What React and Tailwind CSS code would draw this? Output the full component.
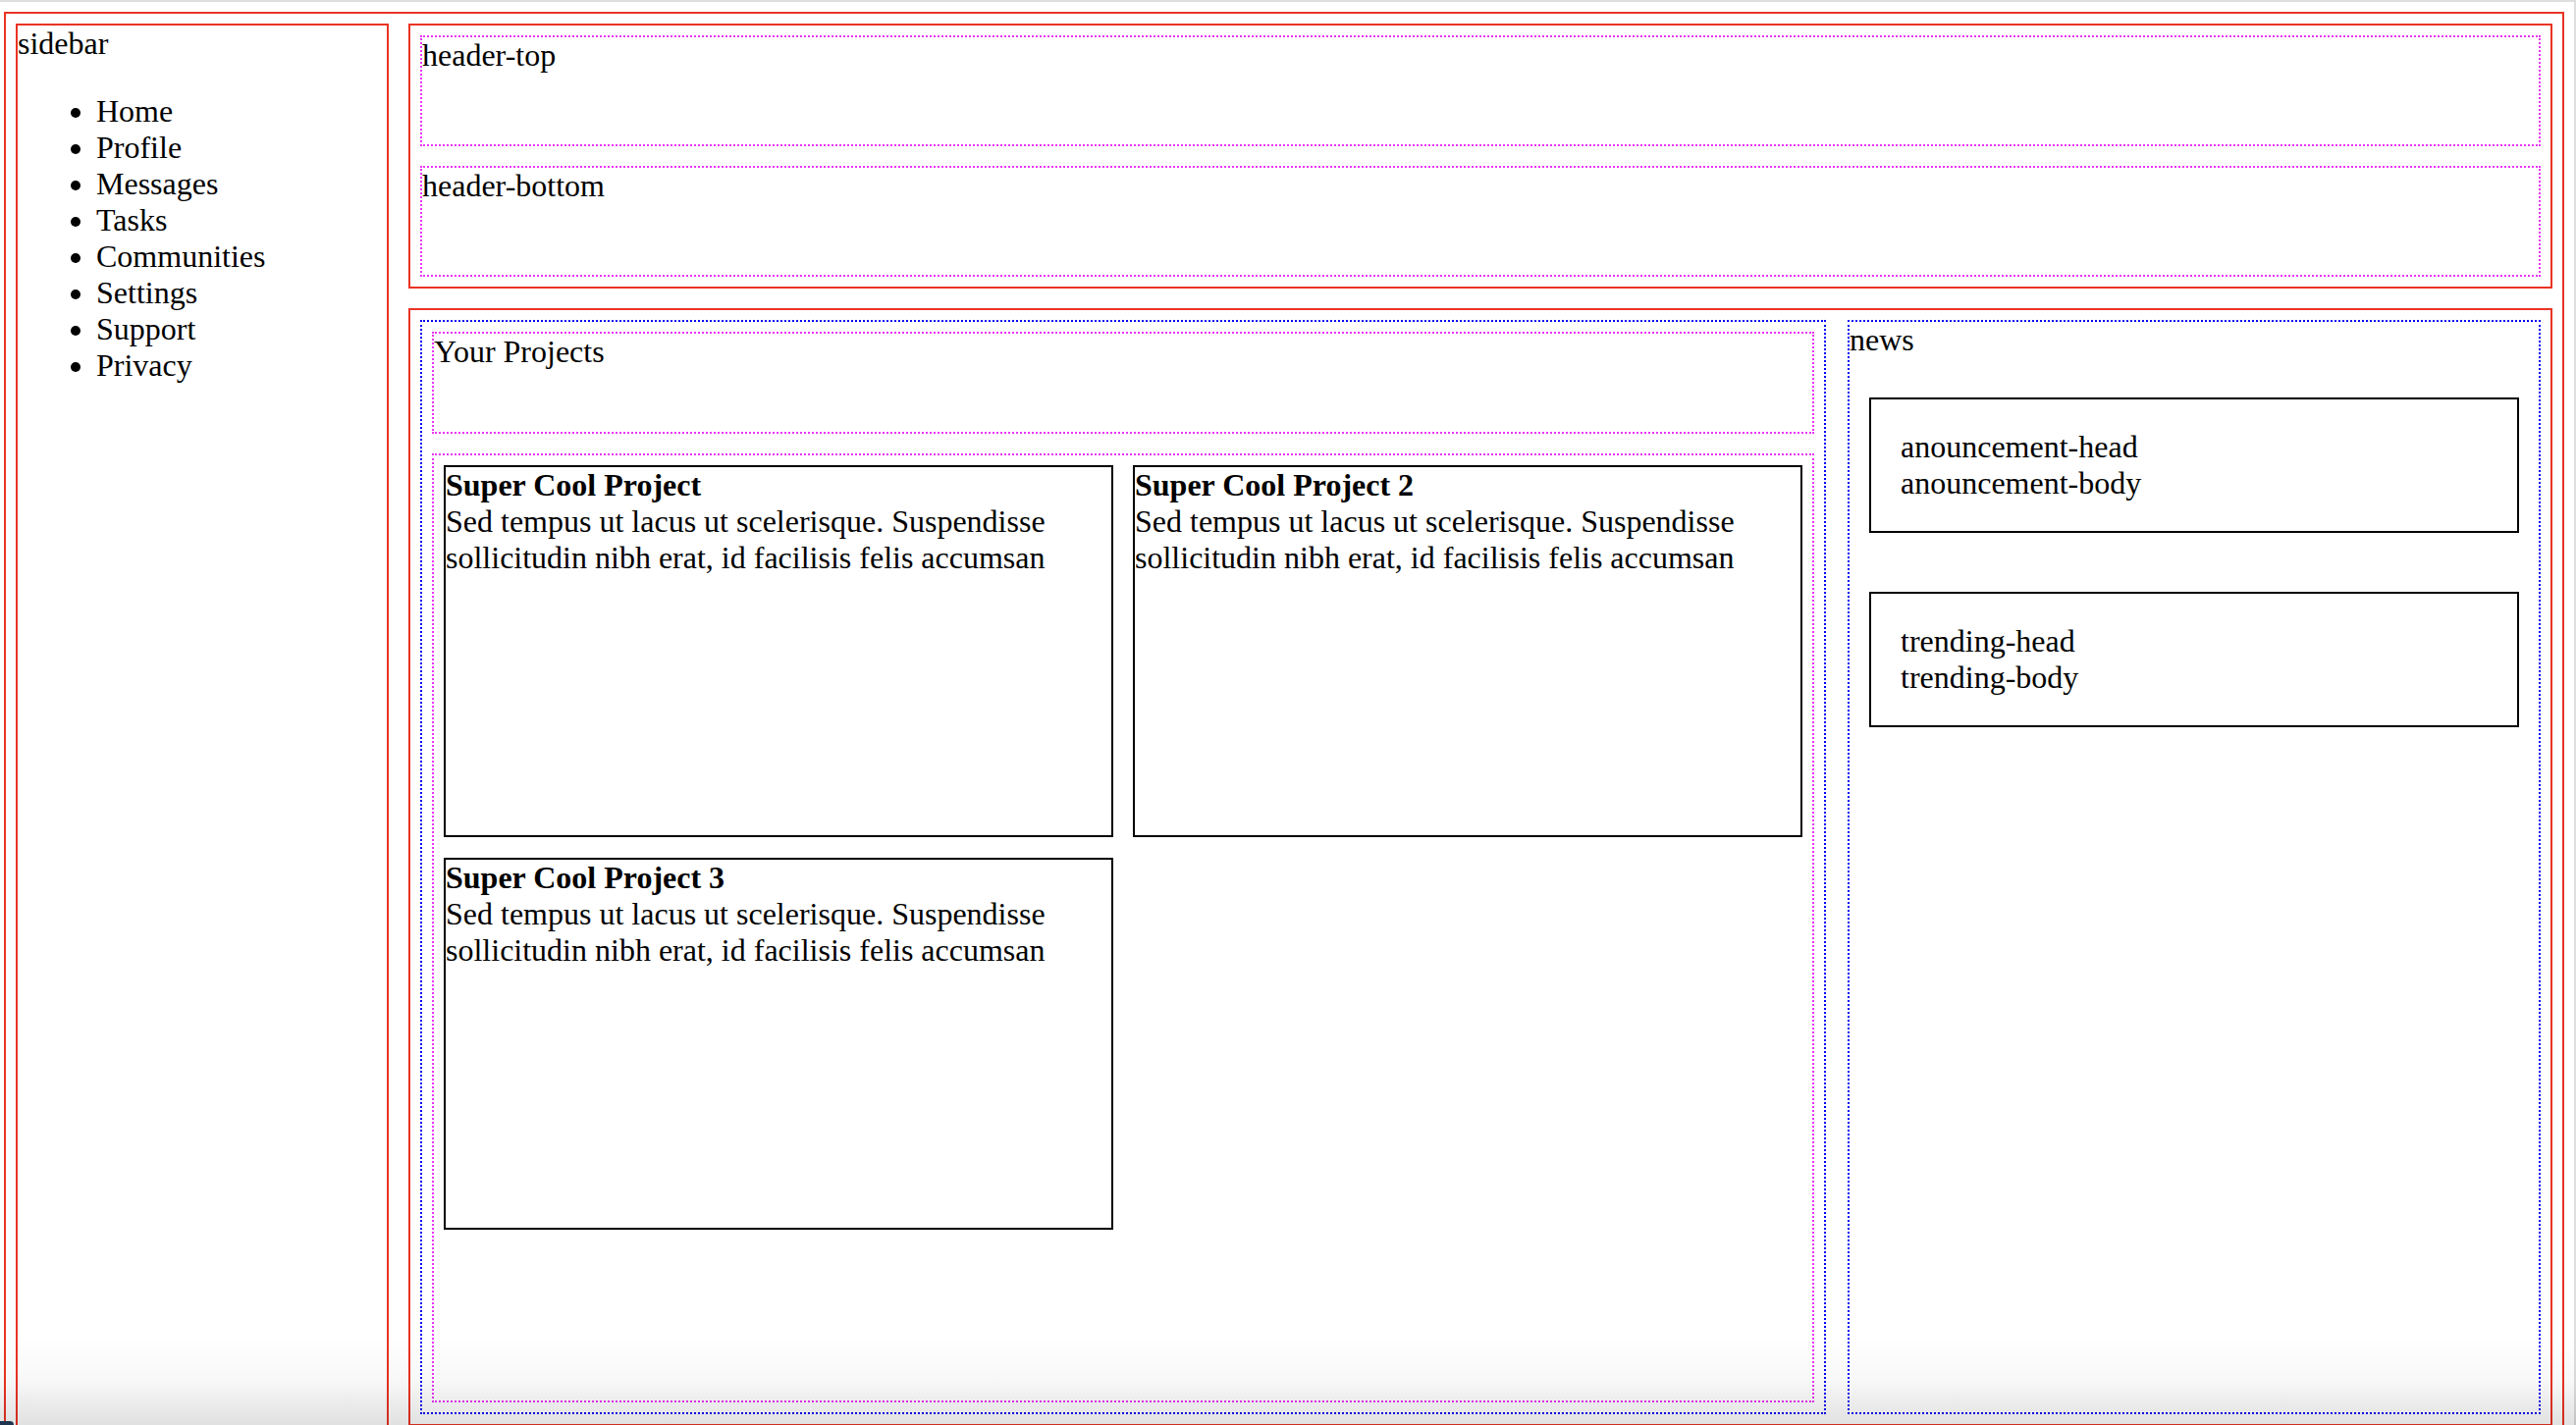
export default function App() {
  const links = ["Home", "Profile", "Messages", "Tasks", "Communities", "Settings", "Support", "Privacy"];
  const projects = ["Super Cool Project", "Super Cool Project 2", "Super Cool Project 3"];

  return (
    <div className="relative h-[1452px] overflow-hidden bg-[#dedede] pt-[2px] pr-[2px] font-['Liberation_Serif','Times_New_Roman',serif] text-[32px] leading-[37px] text-black">
      <div className="h-full bg-white pt-[10px] pr-[10px] pl-[4px]">
        <div className="flex h-[1600px] gap-[20px] border-2 border-[#ea3323] p-[10px]">
          {/* sidebar */}
          <aside className="w-[380px] shrink-0 border-2 border-[#ea3323]">
            <div>sidebar</div>
            <ul className="mt-[32px] list-disc pl-[80px]">
              {links.map(link => (
                <li key={link}>{link}</li>
              ))}
            </ul>
          </aside>

          <div className="flex flex-1 flex-col gap-[20px]">
            {/* header */}
            <header className="flex flex-col gap-[20px] border-2 border-[#ea3323] p-[10px]">
              <div className="h-[113px] border-2 border-dotted border-[#ea33f7]">header-top</div>
              <div className="h-[113px] border-2 border-dotted border-[#ea33f7]">header-bottom</div>
            </header>

            {/* main */}
            <main className="grid h-[1139px] grid-cols-[1432px_1fr] gap-x-[22px] border-2 border-[#ea3323] p-[10px]">
              <section className="flex flex-col gap-[20px] border-2 border-dotted border-[#0000f5] p-[10px]">
                <div className="h-[104px] border-2 border-dotted border-[#ea33f7]">Your Projects</div>
                <div className="grid flex-1 grid-cols-2 content-start gap-x-[20px] gap-y-[21px] border-2 border-dotted border-[#ea33f7] p-[10px]">
                  {projects.map(title => (
                    <div key={title} className="h-[379px] border-2 border-black">
                      <div className="font-bold">{title}</div>
                      <p>
                        Sed tempus ut lacus ut scelerisque. Suspendisse
                        <br />
                        sollicitudin nibh erat, id facilisis felis accumsan
                      </p>
                    </div>
                  ))}
                </div>
              </section>

              <section className="border-2 border-dotted border-[#0000f5]">
                <div>news</div>
                <div className="mx-[20px] mt-[40px] border-2 border-black p-[30px]">
                  <div>anouncement-head</div>
                  <div>anouncement-body</div>
                </div>
                <div className="mx-[20px] mt-[60px] border-2 border-black p-[30px]">
                  <div>trending-head</div>
                  <div>trending-body</div>
                </div>
              </section>
            </main>
          </div>
        </div>
      </div>

      {/* window shadow at the bottom edge */}
      <div className="pointer-events-none absolute inset-x-0 bottom-0 h-[90px] bg-linear-to-b from-transparent via-black/[0.03] to-black/[0.12]" />
      <div className="absolute bottom-0 left-0 h-[4px] w-[14px] rounded-tr-[4px] bg-[#1f3550]" />
    </div>
  );
}
